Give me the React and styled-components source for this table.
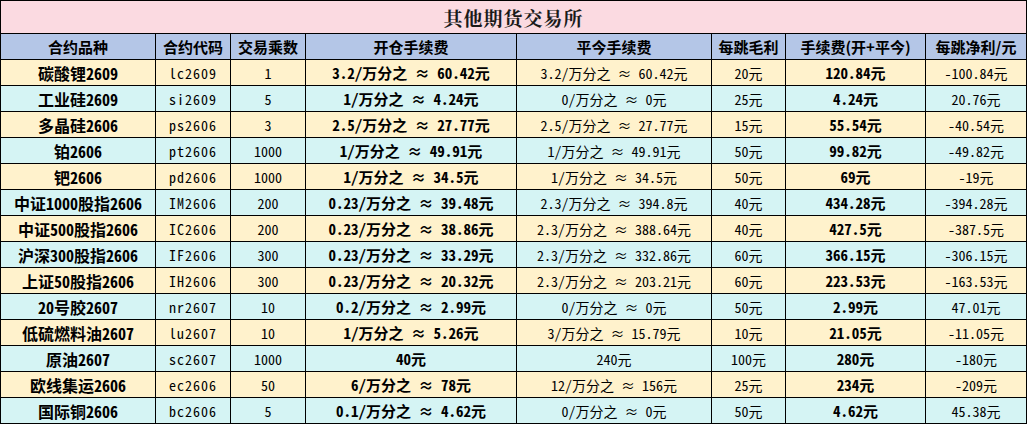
import React from "react";
import styled, { createGlobalStyle } from "styled-components";

const GlobalStyle = createGlobalStyle`
  html, body { margin: 0; padding: 0; background: #ffffff; }
  body { font-family: "Noto Sans Mono CJK SC", "Noto Sans CJK SC", sans-serif; }
`;

const Sheet = styled.div`
  display: grid;
  grid-template-columns: 154px 74px 74px 210px 194px 73px 139px 100px;
  grid-template-rows: 32px 25px;
  grid-auto-rows: 25px;
  gap: 1px;
  padding: 1px;
  width: max-content;
  background: #000000;
`;

const Title = styled.div`
  grid-column: 1 / -1;
  display: flex;
  align-items: center;
  justify-content: center;
  background: #fbdae1;
  color: #1a1a1a;
  font-family: "Noto Serif CJK SC", "Noto Sans CJK SC", serif;
  font-weight: 700;
  font-size: 19px;
  letter-spacing: 1px;
`;

const HeadCell = styled.div`
  display: flex;
  align-items: center;
  justify-content: center;
  background: #b4c6e7;
  color: #000;
  font-family: "Noto Sans CJK SC", sans-serif;
  font-weight: 700;
  font-size: 15px;
  white-space: nowrap;
`;

const tones = {
  yellow: "#fff2cc",
  cyan: "#d5f4f4",
};

const sizes = {
  name: "16px",
  bold: "15px",
  plain: "14px",
  code: "14px",
};

const Cell = styled.div`
  display: flex;
  align-items: center;
  justify-content: center;
  background: ${(p) => tones[p.$tone]};
  color: #000;
  font-size: ${(p) => sizes[p.$kind]};
  font-weight: ${(p) => (p.$kind === "name" || p.$kind === "bold" ? 700 : 400)};
  letter-spacing: ${(p) => (p.$kind === "code" ? "1px" : "0")};
  white-space: nowrap;
  overflow: hidden;
`;

const headers = [
  "合约品种",
  "合约代码",
  "交易乘数",
  "开仓手续费",
  "平今手续费",
  "每跳毛利",
  "手续费(开+平今)",
  "每跳净利/元",
];

const rows = [
  ["碳酸锂2609", "lc2609", "1", "3.2/万分之 ≈ 60.42元", "3.2/万分之 ≈ 60.42元", "20元", "120.84元", "-100.84元"],
  ["工业硅2609", "si2609", "5", "1/万分之 ≈ 4.24元", "0/万分之 ≈ 0元", "25元", "4.24元", "20.76元"],
  ["多晶硅2606", "ps2606", "3", "2.5/万分之 ≈ 27.77元", "2.5/万分之 ≈ 27.77元", "15元", "55.54元", "-40.54元"],
  ["铂2606", "pt2606", "1000", "1/万分之 ≈ 49.91元", "1/万分之 ≈ 49.91元", "50元", "99.82元", "-49.82元"],
  ["钯2606", "pd2606", "1000", "1/万分之 ≈ 34.5元", "1/万分之 ≈ 34.5元", "50元", "69元", "-19元"],
  ["中证1000股指2606", "IM2606", "200", "0.23/万分之 ≈ 39.48元", "2.3/万分之 ≈ 394.8元", "40元", "434.28元", "-394.28元"],
  ["中证500股指2606", "IC2606", "200", "0.23/万分之 ≈ 38.86元", "2.3/万分之 ≈ 388.64元", "40元", "427.5元", "-387.5元"],
  ["沪深300股指2606", "IF2606", "300", "0.23/万分之 ≈ 33.29元", "2.3/万分之 ≈ 332.86元", "60元", "366.15元", "-306.15元"],
  ["上证50股指2606", "IH2606", "300", "0.23/万分之 ≈ 20.32元", "2.3/万分之 ≈ 203.21元", "60元", "223.53元", "-163.53元"],
  ["20号胶2607", "nr2607", "10", "0.2/万分之 ≈ 2.99元", "0/万分之 ≈ 0元", "50元", "2.99元", "47.01元"],
  ["低硫燃料油2607", "lu2607", "10", "1/万分之 ≈ 5.26元", "3/万分之 ≈ 15.79元", "10元", "21.05元", "-11.05元"],
  ["原油2607", "sc2607", "1000", "40元", "240元", "100元", "280元", "-180元"],
  ["欧线集运2606", "ec2606", "50", "6/万分之 ≈ 78元", "12/万分之 ≈ 156元", "25元", "234元", "-209元"],
  ["国际铜2606", "bc2606", "5", "0.1/万分之 ≈ 4.62元", "0/万分之 ≈ 0元", "50元", "4.62元", "45.38元"],
];

const kindOf = (c) => {
  if (c === 0) return "name";
  if (c === 1) return "code";
  if (c === 3 || c === 6) return "bold";
  return "plain";
};

export default function App() {
  return (
    <>
      <GlobalStyle />
      <Sheet>
        <Title>其他期货交易所</Title>
        {headers.map((h) => (
          <HeadCell key={h}>{h}</HeadCell>
        ))}
        {rows.map((row, r) =>
          row.map((v, c) => (
            <Cell
              key={`${r}-${c}`}
              $tone={r % 2 === 0 ? "yellow" : "cyan"}
              $kind={kindOf(c)}
            >
              {v}
            </Cell>
          ))
        )}
      </Sheet>
    </>
  );
}
